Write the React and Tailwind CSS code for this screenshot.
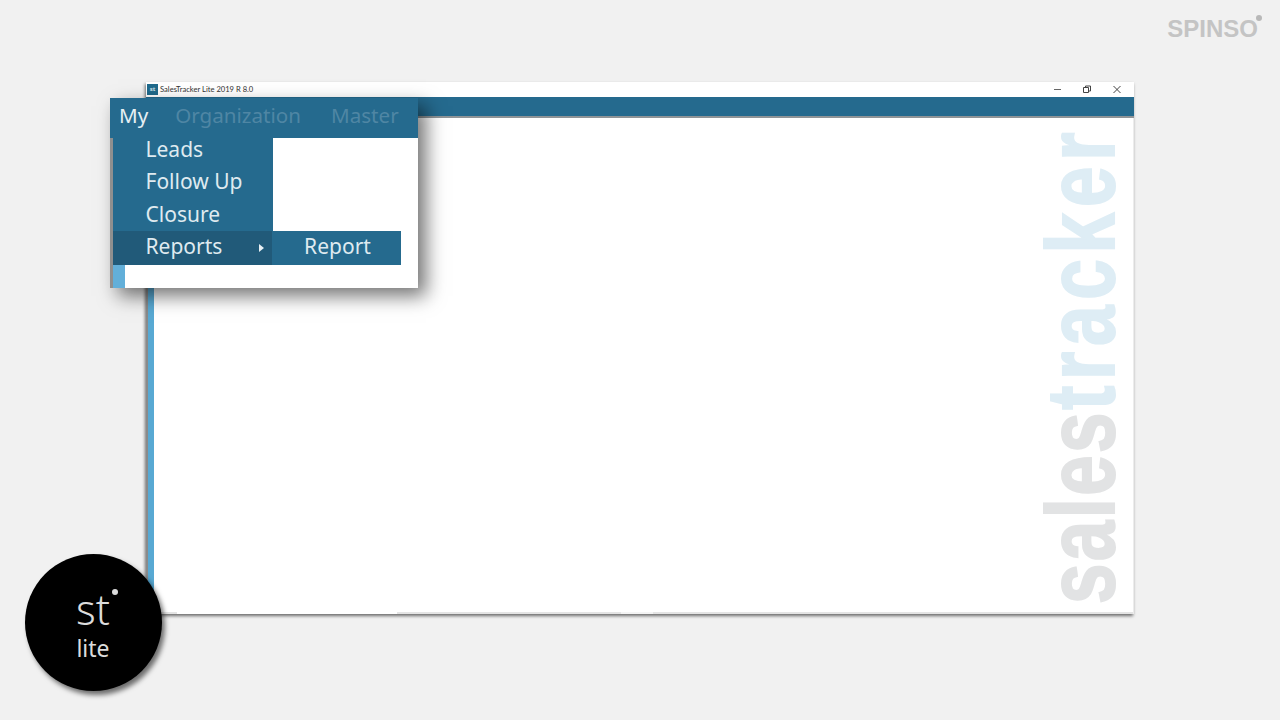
import React from "react";

function MenuRow({ children }) {
  return (
    <div className="h-[31px] pb-[8px] flex items-center shrink-0 pl-[32.5px] text-[21px] text-[#dfeaf0]">
      {children}
    </div>
  );
}

export default function App() {
  return (
    <div className="relative w-[1280px] h-[720px] overflow-hidden bg-[#f1f1f1] pt-[82px] pl-[146px] [font-family:'Noto_Sans',sans-serif]">
      <div className="absolute right-[22px] top-[15px] text-[24px] leading-[28px] font-bold text-[#c4c4c4] [font-family:'Liberation_Sans',sans-serif]">
        SPINSO
        <span className="absolute right-[-4px] top-[0px] w-[6px] h-[6px] rounded-full bg-[#b8b8b8]" />
      </div>

      {/* Application window */}
      <div className="relative w-[988px] h-[532px] flex flex-col bg-white shadow-[-1px_2px_3px_rgba(0,0,0,0.55)]">
        <div className="h-[15px] flex items-center bg-white pl-[1px]">
          <div className="w-[11px] h-[11px] bg-[#1f6a8c] text-[6px] leading-[11px] text-center font-bold text-[#cfe3ec]">st</div>
          <span className="ml-[2px] text-[7.6px] leading-[15px] text-[#333] [font-family:'Lato',sans-serif]">SalesTracker Lite 2019 R 8.0</span>
          <div className="ml-auto flex items-center">
            <svg width="30" height="15" viewBox="0 0 30 15"><path d="M10 7.5h7" stroke="#666" strokeWidth="1" /></svg>
            <svg width="30" height="15" viewBox="0 0 30 15"><path d="M9.5 5.5h5v5h-5z M11.5 5.5v-1.5h5v5h-2" fill="none" stroke="#444" strokeWidth="1" /></svg>
            <svg width="30" height="15" viewBox="0 0 30 15"><path d="M9.5 4l7 7M16.5 4l-7 7" stroke="#444" strokeWidth="1" /></svg>
          </div>
        </div>
        <div className="h-[19px] bg-[#256a8e]" />
        <div className="h-[2px] bg-[#8f9497]" />
        <div className="flex-1 flex min-h-0 pl-[2px] bg-[#8a8a8a]">
          <div className="w-[6px] bg-[#58a9d3]" />
          <div className="flex-1 flex flex-col bg-white border-r border-[#ececec]">
            <div className="flex-1" />
            <div className="h-[2px] flex bg-[#e4e4e4]">
              <div className="ml-[23px] w-[220px] bg-white" />
              <div className="ml-[224px] w-[32px] bg-[#f4f4f4]" />
            </div>
          </div>
        </div>

        {/* Watermark */}
        <div className="absolute left-[983px] bottom-[10px] origin-bottom-left whitespace-nowrap text-[96px] leading-[96px] font-bold [font-family:'Liberation_Sans',sans-serif] [transform:rotate(-90deg)_scaleX(0.76)]">
          <span className="tracking-[3px] text-[#e2e3e4] [-webkit-text-stroke:2px_#e2e3e4]">sales</span>
          <span className="tracking-[7.5px] text-[#deedf5] [-webkit-text-stroke:2px_#deedf5]">tracker</span>
        </div>
      </div>

      {/* Menu screenshot overlay */}
      <div className="absolute left-[110px] top-[98px] w-[308px] h-[190px] flex flex-col bg-white shadow-[8px_8px_18px_rgba(0,0,0,0.55)]">
        <div className="h-[40px] pb-[5px] flex items-center bg-[#256a8e] text-[20.6px]">
          <span className="ml-[9px] text-[#e6eff3]">My</span>
          <span className="ml-[27px] text-[#4f86a4]">Organization</span>
          <span className="ml-[30px] text-[#4f86a4]">Master</span>
        </div>
        <div className="flex-1 flex min-h-0 pl-[3px] bg-[#8f8f8f]">
          <div className="flex-1 flex flex-col bg-white">
            <div className="w-[160px] h-[93px] flex flex-col gap-[1.5px] bg-[#256a8e]">
              <MenuRow>Leads</MenuRow>
              <MenuRow>Follow Up</MenuRow>
              <MenuRow>Closure</MenuRow>
            </div>
            <div className="flex h-[34px]">
              <div className="w-[159px] pb-[2px] flex items-center pl-[32.5px] pr-[8px] bg-[#215a79] text-[21px] text-[#dfeaf0]">
                Reports
                <svg width="5" height="8" viewBox="0 0 5 8" className="ml-auto mt-[2px]"><path d="M0 0l5 4-5 4z" fill="#e8f0f4" /></svg>
              </div>
              <div className="w-[129px] pb-[2px] pl-[2px] flex items-center justify-center bg-[#256a8e] text-[21px] text-[#dfeaf0]">Report</div>
            </div>
            <div className="flex-1 flex">
              <div className="w-[12px] bg-[#62afd9]" />
            </div>
          </div>
        </div>
      </div>

      {/* Product badge */}
      <div className="absolute left-[24.5px] top-[553.5px] w-[137px] h-[137px] rounded-full bg-black flex flex-col items-center text-[#dcdcdc] shadow-[3px_4px_5px_rgba(0,0,0,0.55)]">
        <div className="relative mt-[33px] text-[42px] leading-[44px] font-light">
          st
          <span className="absolute right-[-8px] top-[2px] w-[6px] h-[6px] rounded-full bg-[#dcdcdc]" />
        </div>
        <div className="text-[23px] leading-[26px] mt-[4px]">lite</div>
      </div>
    </div>
  );
}
